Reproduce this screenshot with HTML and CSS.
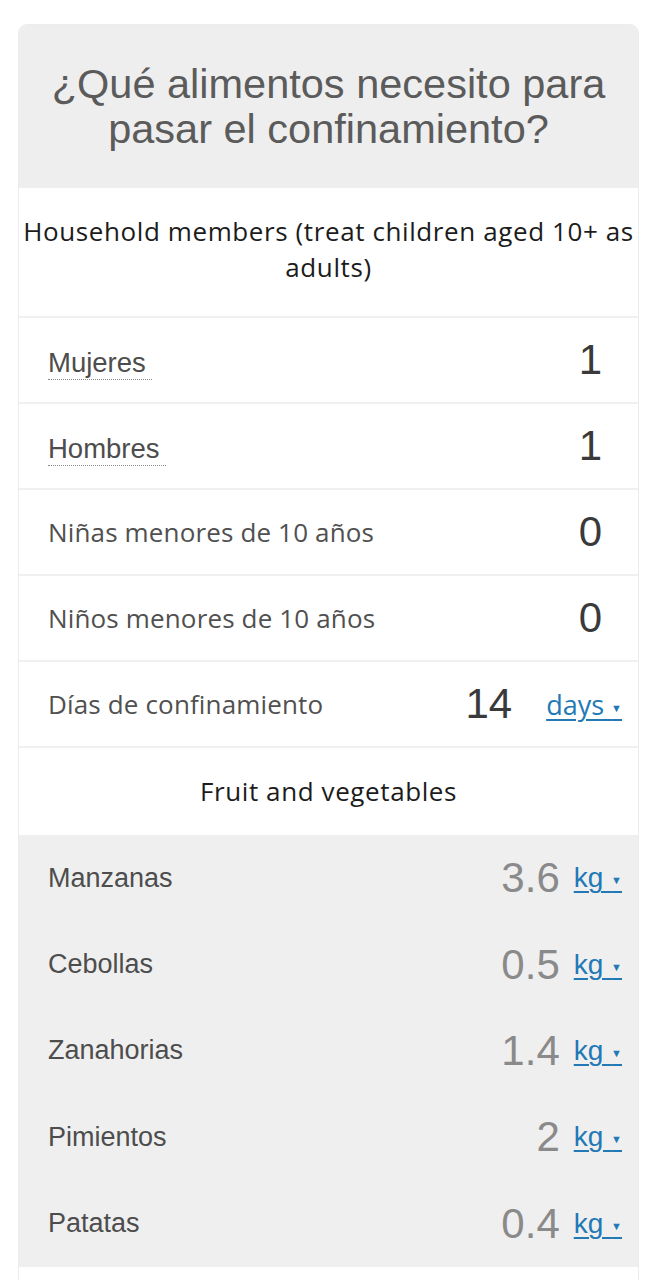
FILE: index.html
```html
<!DOCTYPE html>
<html lang="es">
<head>
<meta charset="utf-8">
<link rel="stylesheet" href="styles.css">
</head>
<body>
<div class="card">
  <div class="card-head">
    <h1 class="title">¿Qué alimentos necesito para pasar el confinamiento?</h1>
  </div>
  <div class="section">Household members (treat children aged 10+ as adults)</div>
  <div class="row">
    <span class="label"><span class="abbr">Mujeres</span></span>
    <span class="value member">1</span>
  </div>
  <div class="row">
    <span class="label"><span class="abbr">Hombres</span></span>
    <span class="value member">1</span>
  </div>
  <div class="row">
    <span class="label alt">Niñas menores de 10 años</span>
    <span class="value member">0</span>
  </div>
  <div class="row">
    <span class="label alt">Niños menores de 10 años</span>
    <span class="value member">0</span>
  </div>
  <div class="row">
    <span class="label alt">Días de confinamiento</span>
    <span class="value days">14</span>
    <a class="unit unit-days" href="#">days <span class="tri">▼</span></a>
  </div>
  <div class="section section-fv">Fruit and vegetables</div>
  <div class="group">
    <div class="row grey">
      <span class="label">Manzanas</span>
      <span class="value out">3.6</span>
      <a class="unit" href="#">kg <span class="tri">▼</span></a>
    </div>
    <div class="row grey">
      <span class="label">Cebollas</span>
      <span class="value out">0.5</span>
      <a class="unit" href="#">kg <span class="tri">▼</span></a>
    </div>
    <div class="row grey">
      <span class="label">Zanahorias</span>
      <span class="value out">1.4</span>
      <a class="unit" href="#">kg <span class="tri">▼</span></a>
    </div>
    <div class="row grey">
      <span class="label">Pimientos</span>
      <span class="value out">2</span>
      <a class="unit" href="#">kg <span class="tri">▼</span></a>
    </div>
    <div class="row grey">
      <span class="label">Patatas</span>
      <span class="value out">0.4</span>
      <a class="unit" href="#">kg <span class="tri">▼</span></a>
    </div>
  </div>
  <div class="tail"></div>
</div>
</body>
</html>
```

FILE: styles.css
```css
html, body {
  margin: 0;
  padding: 0;
  background: #ffffff;
}
body {
  font-family: "Liberation Sans", Arial, sans-serif;
  color: #333;
}
.card {
  margin: 24px 17px 0 18px;
  border: 1px solid #ececec;
  border-radius: 9px;
  overflow: hidden;
  background: #fff;
}
.card-head {
  background: #eeeeee;
  padding: 36px 16px 37px;
}
.title {
  margin: 0;
  font-weight: normal;
  font-size: 41.5px;
  line-height: 45px;
  color: #5b5b5b;
  text-align: center;
}
.section {
  font-family: "Open Sans", sans-serif;
  font-size: 26px;
  letter-spacing: 0.6px;
  line-height: 36px;
  color: #1c1c1c;
  text-align: center;
  padding: 25px 0 31px;
  border-bottom: 2px solid #f0f0f0;
}
.section-fv {
  padding: 0;
  height: 87px;
  line-height: 87px;
  border-bottom: 0;
}
.row {
  display: flex;
  align-items: center;
  height: 84px;
  padding: 0 16px 0 29px;
  border-bottom: 2px solid #f0f0f0;
}
.row.grey {
  background: #efefef;
  border-bottom: 0;
  height: 86.4px;
}
.label {
  flex: 1;
  font-size: 27.5px;
  color: #4d4d4d;
}
.grey .label {
  font-size: 27px;
}
.label.alt {
  font-family: "Open Sans", sans-serif;
  font-size: 26px;
  letter-spacing: 0.15px;
  color: #505050;
}
.abbr {
  display: inline-block;
  padding-right: 6px;
  line-height: 30px;
  padding-top: 8px;
  padding-bottom: 1px;
  border-bottom: 1px dotted #8a8a8a;
}
.value {
  font-size: 42px;
  color: #3a3a3a;
}
.value.member {
  margin-right: 20px;
}
.value.days {
  margin-right: 34px;
}
.value.out {
  color: #8a8a8a;
  margin-right: 14px;
}
.unit {
  font-size: 28px;
  color: #2279b5;
  text-decoration: underline;
  text-underline-offset: 4px;
  text-decoration-thickness: 2px;
}
.unit-days {
  font-family: "Open Sans", sans-serif;
  font-size: 27px;
}
.tri {
  font-size: 11px;
  vertical-align: middle;
}
.tail {
  height: 20px;
}
```
